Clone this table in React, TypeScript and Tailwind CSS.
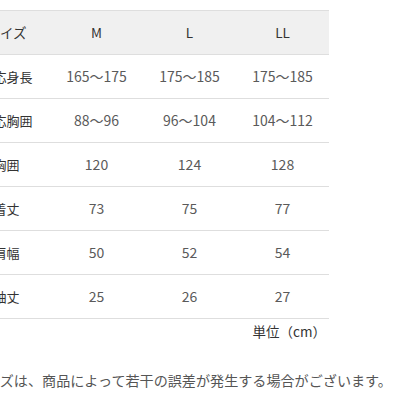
const sizes = ['M', 'L', 'LL']

const rows: { label: string; values: string[] }[] = [
  { label: '適応身長', values: ['165〜175', '175〜185', '175〜185'] },
  { label: '適応胸囲', values: ['88〜96', '96〜104', '104〜112'] },
  { label: '胸囲', values: ['120', '124', '128'] },
  { label: '着丈', values: ['73', '75', '77'] },
  { label: '肩幅', values: ['50', '52', '54'] },
  { label: '袖丈', values: ['25', '26', '27'] },
]

export default function App() {
  return (
    <div
      className="w-[401px] h-[401px] overflow-hidden bg-white"
      style={{ fontFamily: '"Noto Sans CJK JP", "Noto Sans", sans-serif' }}
    >
      <div className="ml-[-37px] w-[366px] pt-[10px]">
        <div className="flex h-[45px] items-center border-t border-b border-[#dedede] bg-[#f0f0f0] text-[13.5px] text-[#333]">
          <div className="w-[87px] text-center">サイズ</div>
          {sizes.map((s) => (
            <div key={s} className="w-[93px] text-center">
              {s}
            </div>
          ))}
        </div>
        {rows.map((r) => (
          <div key={r.label} className="flex h-[44px] items-center border-b border-[#dedede]">
            <div className="w-[87px] text-center text-[13px] text-[#333]">{r.label}</div>
            {r.values.map((v, i) => (
              <div key={i} className="w-[93px] text-center text-[14px] text-[#5a5a5a]">
                {v}
              </div>
            ))}
          </div>
        ))}
        <div className="flex justify-end pr-[3px] pt-[2px] text-[13.5px] leading-[20px] text-[#333]">単位（cm）</div>
      </div>
      <p className="ml-[-28px] mt-[29px] whitespace-nowrap text-[14.1px] leading-[20px] text-[#555]">
        サイズは、商品によって若干の誤差が発生する場合がございます。
      </p>
    </div>
  )
}
